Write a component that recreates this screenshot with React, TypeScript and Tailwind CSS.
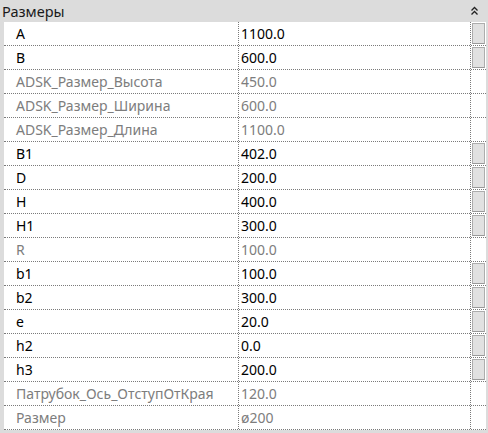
import React from "react";

type Row = { name: string; value: string; editable: boolean };

const rows: Row[] = [
  { name: "A", value: "1100.0", editable: true },
  { name: "B", value: "600.0", editable: true },
  { name: "ADSK_Размер_Высота", value: "450.0", editable: false },
  { name: "ADSK_Размер_Ширина", value: "600.0", editable: false },
  { name: "ADSK_Размер_Длина", value: "1100.0", editable: false },
  { name: "B1", value: "402.0", editable: true },
  { name: "D", value: "200.0", editable: true },
  { name: "H", value: "400.0", editable: true },
  { name: "H1", value: "300.0", editable: true },
  { name: "R", value: "100.0", editable: false },
  { name: "b1", value: "100.0", editable: true },
  { name: "b2", value: "300.0", editable: true },
  { name: "e", value: "20.0", editable: true },
  { name: "h2", value: "0.0", editable: true },
  { name: "h3", value: "200.0", editable: true },
  { name: "Патрубок_Ось_ОтступОтКрая", value: "120.0", editable: false },
  { name: "Размер", value: "ø200", editable: false },
];

export default function App() {
  return (
    <div
      className="w-[488px] h-[433px] bg-[#dcdcdc] overflow-hidden"
      style={{ fontFamily: '"Noto Sans", "Open Sans", sans-serif' }}
    >
      <div className="w-[486px] h-[22px] flex items-center justify-between bg-[#dcdcdc]">
        <span className="pl-[2px] text-[14.5px] text-[#1a1a1a] leading-none">Размеры</span>
        <svg width="9" height="10" viewBox="0 0 9 10" className="mr-[7px]">
          <path d="M1.5 4.5 L4.5 1.5 L7.5 4.5" fill="none" stroke="#222" strokeWidth="1.3" />
          <path d="M1.5 8.5 L4.5 5.5 L7.5 8.5" fill="none" stroke="#222" strokeWidth="1.3" />
        </svg>
      </div>
      <div className="flex w-[486px]">
        <div className="w-[4px] bg-[#dcdcdc]" />
        <div className="flex flex-col w-[482px] bg-white">
          {rows.map((r) => (
            <div
              key={r.name}
              className="flex h-[24px] border-b border-dotted border-[#7a7a7a]"
            >
              <div
                className={`w-[234px] flex items-center pl-[12px] text-[14px] whitespace-nowrap ${
                  r.editable ? "text-black" : "text-[#7d7d7d]"
                }`}
              >
                {r.name}
              </div>
              <div
                className={`w-[232px] flex items-center pl-[2px] border-l border-dotted border-[#7a7a7a] text-[14px] ${
                  r.editable ? "text-black" : "text-[#7d7d7d]"
                }`}
              >
                {r.value}
              </div>
              <div className="flex-1 border-l border-dotted border-[#7a7a7a] flex items-stretch py-[1px] pr-[1px] pl-[1px]">
                {r.editable && (
                  <div className="flex-1 bg-[#e1e1e1] border border-[#adadad] border-b-[#9a9a9a]" />
                )}
              </div>
            </div>
          ))}
        </div>
      </div>
    </div>
  );
}
